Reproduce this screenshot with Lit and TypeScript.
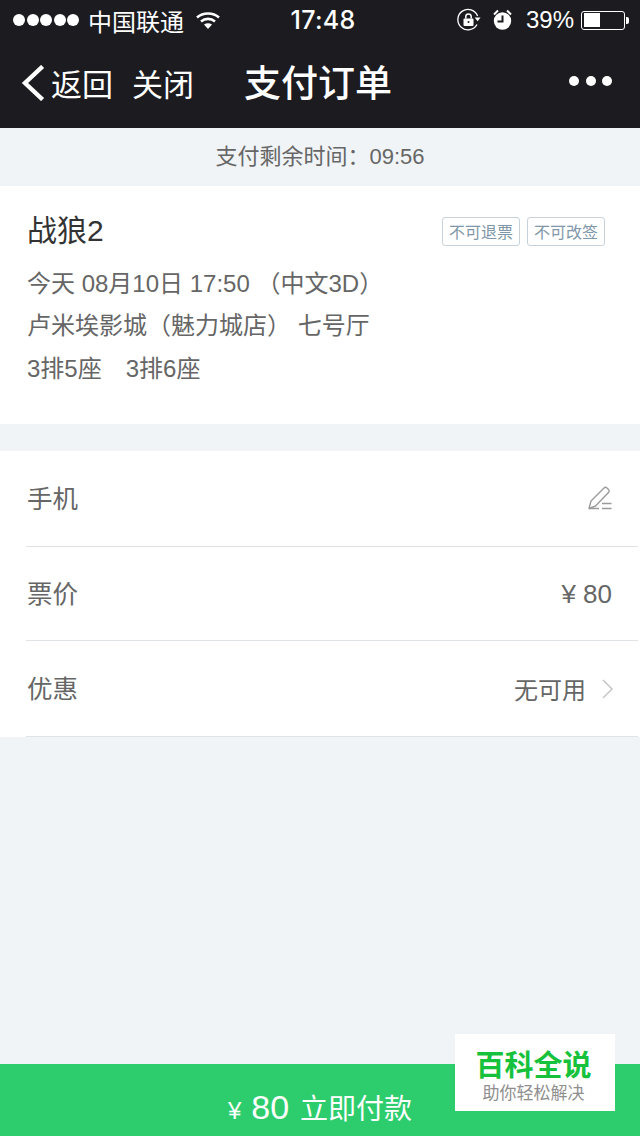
import { LitElement, html, css } from "lit";
import { customElement } from "lit/decorators.js";

@customElement("app-root")
export class AppRoot extends LitElement {
  static styles = css`
    :host {
      display: block;
      width: 640px;
      height: 1136px;
      position: relative;
      overflow: hidden;
      background: #f0f4f7;
      font-family: "Liberation Sans", "Noto Sans CJK SC", sans-serif;
      color: #555;
    }
    .page { display: flex; flex-direction: column; height: 1136px; }
    .head { background: #1b1b20; color: #fff; height: 128px; flex: none; display: flex; flex-direction: column; }
    .status { height: 40px; display: flex; align-items: center; padding: 0 11px 0 13px; font-size: 24px; position: relative; }
    .dots { display: flex; gap: 1.5px; margin-right: 9px; }
    .dots i { width: 12px; height: 12px; border-radius: 50%; background: #fff; display: block; }
    .carrier { font-size: 24px; }
    .wifi { margin-left: 11px; }
    .time { position: absolute; left: 6px; right: 0; top: 0; height: 40px; line-height: 40px; text-align: center; font-family: "Inter", sans-serif; font-size: 25px; font-weight: 500; letter-spacing: 0.3px; }
    .stat-right { margin-left: auto; display: flex; align-items: center; }
    .alarm { margin-left: 11px; }
    .pct { margin: 0 7px 0 13px; font-size: 24px; }
    .batt { width: 44px; height: 19px; border: 1.5px solid #fff; border-radius: 3px; box-sizing: border-box; padding: 1.5px; }
    .batt b { display: block; width: 16px; height: 100%; background: #fff; }
    .nub { width: 3px; height: 7px; background: #fff; margin-left: 1px; border-radius: 0 2px 2px 0; }
    .nav { flex: 1; display: flex; align-items: center; padding: 0 28px 6px 21px; }
    .back { margin: 4px 6px 0 0; display: block; }
    .navlink { font-size: 31px; margin-top: 2px; }
    .close { margin-left: 19px; }
    .title { margin-left: 50px; font-size: 37px; font-weight: 500; }
    .more { margin-left: auto; display: flex; gap: 6.5px; }
    .more i { width: 10px; height: 10px; border-radius: 50%; background: #fff; display: block; }
    .timer { height: 58px; flex: none; display: flex; align-items: center; justify-content: center; font-size: 22px; color: #666; padding-bottom: 6px; box-sizing: border-box; }
    .card { background: #fff; height: 238px; flex: none; box-sizing: border-box; padding: 0 35px 0 27px; display: flex; flex-direction: column; }
    .titlerow { display: flex; align-items: center; height: 90px; padding-bottom: 6px; box-sizing: border-box; margin-bottom: -16px; }
    .movie { font-size: 30px; color: #333; }
    .tags { margin-left: auto; display: flex; gap: 7px; margin-top: 6px; }
    .tag { font-size: 16px; color: #7f97a8; border: 1px solid #c8d2da; border-radius: 3px; height: 29px; width: 78px; box-sizing: border-box; display: flex; align-items: center; justify-content: center; }
    .info { font-size: 24px; color: #666; height: 42.5px; display: flex; align-items: center; white-space: pre; }
    .seats { gap: 24px; }
    .list { margin-top: 27px; background: #fff; flex: none; height: 286px; display: flex; flex-direction: column; }
    .row { flex: none; margin: 0 2px 0 26px; box-sizing: border-box; border-bottom: 1px solid #dfe3e6; display: flex; align-items: center; padding: 0 26px 0 1px; font-size: 25.5px; color: #666; }
    .r1 { height: 96px; padding-bottom: 5px; padding-right: 25px; }
    .r2 { height: 94px; padding-bottom: 4px; }
    .r3 { height: 96px; padding-bottom: 4px; padding-right: 24px; }
    .val { margin-left: auto; display: flex; align-items: center; font-size: 24px; padding-top: 3px; }
    .r1 .val { padding-top: 4px; }
    .r2 .val { font-size: 26px; padding-top: 6px; }
    .r3 svg { margin: 2px 0 0 15px; }
    .spacer { flex: 1; }
    .pay { height: 72px; flex: none; background: #2dcd6e; color: #fff; display: flex; align-items: baseline; justify-content: center; box-sizing: border-box; padding-top: 23px; }
    .pay .y { font-size: 24px; margin-right: 10px; }
    .pay .n { font-size: 34px; margin-right: 11px; }
    .pay .t { font-size: 28px; }
    .wm { position: absolute; left: 455px; top: 1034px; width: 160px; height: 77px; padding-right: 3px; box-sizing: border-box; background: #fff; display: flex; flex-direction: column; align-items: center; }
    .wm1 { font-size: 29px; font-weight: 700; color: #16c23c; line-height: 34px; margin-top: 15px; }
    .wm2 { font-size: 17px; color: #8f8f8f; line-height: 20px; margin-top: 1px; }
  `;

  render() {
    return html`
      <div class="page">
        <div class="head">
          <div class="status">
            <div class="dots"><i></i><i></i><i></i><i></i><i></i></div>
            <span class="carrier">中国联通</span>
            <svg class="wifi" width="26" height="20" viewBox="0 0 26 20" fill="none" stroke="#fff" stroke-width="2.6">
              <path d="M2 7.5C8 2.2 18 2.2 24 7.5" />
              <path d="M6 11.5C10 8 16 8 20 11.5" />
              <path d="M13 19l-4-4.4c2.4-1.8 5.6-1.8 8 0z" fill="#fff" stroke="none" />
            </svg>
            <div class="time">17:48</div>
            <div class="stat-right">
              <svg width="24" height="24" viewBox="0 0 24 24" fill="none" stroke="#fff" stroke-width="1.3">
                <path d="M20 16.5A10.2 10.2 0 1 1 20.6 8" />
                <path d="M17.6 9.5h6l-3 3.8z" fill="#fff" stroke="none" />
                <rect x="6.5" y="10.5" width="10" height="7.5" rx="1" fill="#fff" stroke="none" />
                <path d="M8.8 10.5V8.6a2.7 2.7 0 0 1 5.4 0v1.9" stroke-width="1.5" />
                <circle cx="11.5" cy="14" r="1" fill="#1b1b20" stroke="none" />
              </svg>
              <svg class="alarm" width="21" height="22" viewBox="0 0 21 22" fill="#fff">
                <circle cx="10.5" cy="12" r="8.7" />
                <path d="M2 5.5L6 1.5M19 5.5L15 1.5" stroke="#fff" stroke-width="2" />
                <path d="M10.5 6.5V12.5H5.5" stroke="#1b1b20" stroke-width="2" fill="none" />
              </svg>
              <span class="pct">39%</span>
              <div class="batt"><b></b></div>
              <div class="nub"></div>
            </div>
          </div>
          <div class="nav">
            <svg class="back" width="24" height="36" viewBox="0 0 24 36" fill="none" stroke="#fff" stroke-width="4.4" stroke-linecap="square">
              <path d="M20 3L4 18L20 33" />
            </svg>
            <span class="navlink">返回</span>
            <span class="navlink close">关闭</span>
            <span class="title">支付订单</span>
            <div class="more"><i></i><i></i><i></i></div>
          </div>
        </div>
        <div class="timer">支付剩余时间：09:56</div>
        <div class="card">
          <div class="titlerow">
            <span class="movie">战狼2</span>
            <div class="tags"><span class="tag">不可退票</span><span class="tag">不可改签</span></div>
          </div>
          <div class="info">今天 08月10日 17:50 （中文3D）</div>
          <div class="info">卢米埃影城（魅力城店） 七号厅</div>
          <div class="info seats"><span>3排5座</span><span>3排6座</span></div>
        </div>
        <div class="list">
          <div class="row r1">手机
            <div class="val">
              <svg width="26" height="24" viewBox="0 0 26 24" fill="none" stroke="#9b9b9b" stroke-width="1.4" stroke-linejoin="round">
                <path d="M2 22.5L4 15L17 2a2 2 0 0 1 3 0l1.5 1.5a2 2 0 0 1 0 3L8.5 20z" />
                <path d="M2 22.5H12M15 17.5H24.5M15 22.5H24.5" />
              </svg>
            </div>
          </div>
          <div class="row r2">票价<div class="val">¥ 80</div></div>
          <div class="row r3">优惠
            <div class="val">无可用
              <svg width="13" height="22" viewBox="0 0 13 22" fill="none" stroke="#c8c8c8" stroke-width="1.6">
                <path d="M2 2L11 11L2 20" />
              </svg>
            </div>
          </div>
        </div>
        <div class="spacer"></div>
        <div class="pay"><span class="y">¥</span><span class="n">80</span><span class="t">立即付款</span></div>
      </div>
      <div class="wm"><div class="wm1">百科全说</div><div class="wm2">助你轻松解决</div></div>
    `;
  }
}
